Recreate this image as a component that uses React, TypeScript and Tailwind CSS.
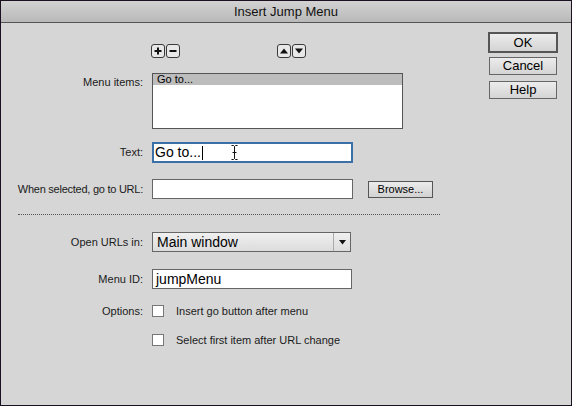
import React from "react";

const font = { fontFamily: '"Liberation Sans", Arial, sans-serif' };

function SmallBtn({ children }: { children: React.ReactNode }) {
  return (
    <div className="w-[14px] h-[14px] rounded-[3px] border border-[#3a3a3a] bg-[#e8e8e8] flex items-center justify-center">
      {children}
    </div>
  );
}

function Label({ children, className = "" }: { children: React.ReactNode; className?: string }) {
  return (
    <div className={"w-[143px] pr-[1px] text-right text-[11px] text-[#1a1a1a] shrink-0 " + className}>{children}</div>
  );
}

function Btn({ children, def = false }: { children: React.ReactNode; def?: boolean }) {
  return (
    <div
      className={
        "flex items-center justify-center text-[13px] text-black bg-gradient-to-b from-[#ececec] to-[#d4d4d4] " +
        (def ? "w-[70px] h-[21px] border-2 border-[#555]" : "w-[68px] h-[18px] border border-[#666] mx-[1px]")
      }
    >
      {children}
    </div>
  );
}

export default function App() {
  return (
    <div className="w-[572px] h-[406px] bg-[#d6d6d6] border border-[#1a1020] flex flex-col" style={font}>
      <div className="h-[22px] shrink-0 bg-gradient-to-b from-[#d2d2d2] to-[#b9b9b9] border-b border-[#555] flex items-center justify-center text-[13px] text-[#111]">
        Insert Jump Menu
      </div>
      <div className="flex flex-1">
        <div className="w-[487px] flex flex-col">
          {/* icon row */}
          <div className="flex mt-[21px] h-[14px]">
            <div className="w-[150px]" />
            <div className="flex gap-[1px]">
              <SmallBtn>
                <svg width="8" height="8" viewBox="0 0 8 8"><path d="M4 0.5v7M0.5 4h7" stroke="#111" strokeWidth="2" /></svg>
              </SmallBtn>
              <SmallBtn>
                <svg width="8" height="8" viewBox="0 0 8 8"><path d="M0.5 4h7" stroke="#111" strokeWidth="2" /></svg>
              </SmallBtn>
            </div>
            <div className="w-[97px]" />
            <div className="flex gap-[1px]">
              <SmallBtn>
                <svg width="8" height="6" viewBox="0 0 8 6"><path d="M0 5.5L4 0.5L8 5.5Z" fill="#111" /></svg>
              </SmallBtn>
              <SmallBtn>
                <svg width="8" height="6" viewBox="0 0 8 6"><path d="M0 0.5L4 5.5L8 0.5Z" fill="#111" /></svg>
              </SmallBtn>
            </div>
          </div>
          {/* menu items */}
          <div className="flex mt-[15px]">
            <Label className="pt-[1px]">Menu items:</Label>
            <div className="ml-[8px] w-[251px] h-[56px] border border-[#555] bg-white">
              <div className="h-[11px] bg-[#bdbdbd] text-[11px] leading-[11px] pl-[4px] text-black">Go to...</div>
            </div>
          </div>
          {/* text */}
          <div className="flex items-center mt-[13px]">
            <Label>Text:</Label>
            <div className="ml-[8px] w-[201px] h-[21px] border-2 border-[#3b6fa8] bg-white flex items-center pl-[1px] text-[14px] text-black relative">
              Go to...<span className="inline-block w-[1px] h-[14px] bg-black ml-[1px]" />
              <svg className="absolute left-[77px] top-[1px]" width="7" height="15" viewBox="0 0 7 15">
                <path d="M0.5 0.5h2l1 1l1-1h2M3.5 1.5v12M0.5 14.5h2l1-1l1 1h2M1.5 7.5h4" stroke="#111" fill="none" strokeWidth="1" />
              </svg>
            </div>
          </div>
          {/* url */}
          <div className="flex items-center mt-[16px]">
            <Label className="tracking-[-0.25px]">When selected, go to URL:</Label>
            <div className="ml-[8px] w-[201px] h-[20px] border border-[#666] bg-white" />
            <div className="ml-[15px] w-[65px] h-[17px] border border-[#555] bg-gradient-to-b from-[#ececec] to-[#d2d2d2] flex items-center justify-center text-[11px] text-black">
              Browse...
            </div>
          </div>
          {/* separator */}
          <div className="ml-[17px] w-[422px] mt-[15px] border-t border-dotted border-[#555]" />
          {/* open urls */}
          <div className="flex items-center mt-[17px]">
            <Label>Open URLs in:</Label>
            <div className="ml-[8px] w-[199px] h-[20px] border border-[#666] bg-gradient-to-b from-[#f0f0f0] to-[#dcdcdc] flex text-[14px] text-black">
              <div className="flex-1 pl-[4px] flex items-center">Main window</div>
              <div className="w-[17px] border-l border-[#aaa] flex items-center justify-center">
                <svg width="7" height="5" viewBox="0 0 7 5"><path d="M0 0L3.5 4.5L7 0Z" fill="#111" /></svg>
              </div>
            </div>
          </div>
          {/* menu id */}
          <div className="flex items-center mt-[17px]">
            <Label>Menu ID:</Label>
            <div className="ml-[8px] w-[200px] h-[20px] border border-[#666] bg-white flex items-center pl-[3px] text-[14px] text-black">
              jumpMenu
            </div>
          </div>
          {/* options */}
          <div className="flex items-center mt-[14px]">
            <Label>Options:</Label>
            <div className="ml-[8px] w-[12px] h-[12px] border border-[#777] bg-white" />
            <div className="ml-[12px] text-[11px] text-[#1a1a1a]">Insert go button after menu</div>
          </div>
          <div className="flex items-center mt-[12px]">
            <div className="w-[151px]" />
            <div className="w-[12px] h-[12px] border border-[#777] bg-white" />
            <div className="ml-[12px] text-[11px] text-[#1a1a1a]">Select first item after URL change</div>
          </div>
        </div>
        <div className="flex flex-col pt-[9px] gap-[4px]">
          <Btn def>OK</Btn>
          <Btn>Cancel</Btn>
          <div className="mt-[2px]">
            <Btn>Help</Btn>
          </div>
        </div>
      </div>
    </div>
  );
}
